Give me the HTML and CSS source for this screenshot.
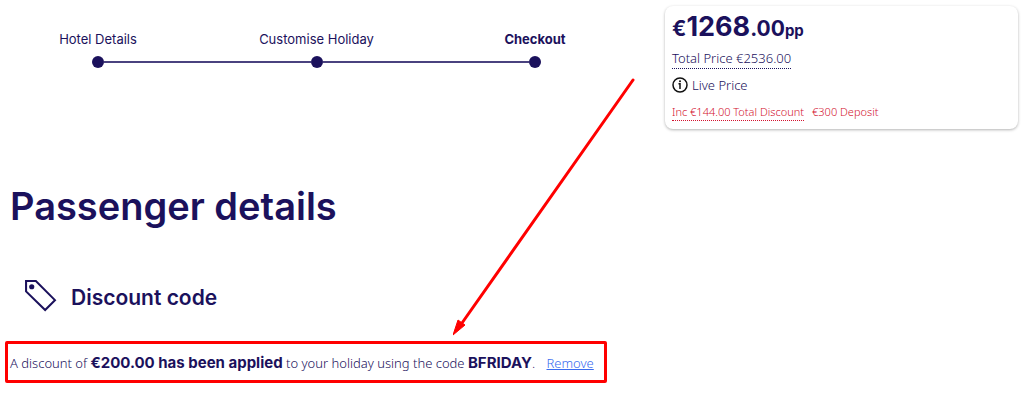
FILE: index.html
```html
<!DOCTYPE html>
<html lang="en">
<head>
<meta charset="utf-8">
<meta name="viewport" content="width=device-width, initial-scale=1">
<title>Passenger details</title>
<link rel="stylesheet" href="styles.css">
</head>
<body>
<div class="page">
  <main class="main">
    <nav class="progress" aria-label="Booking progress">
      <ol class="steps">
        <li class="step">Hotel Details</li>
        <li class="step">Customise Holiday</li>
        <li class="step current" aria-current="step">Checkout</li>
      </ol>
      <div class="track" aria-hidden="true">
        <span class="dot"></span><span class="line"></span><span class="dot"></span><span class="line"></span><span class="dot"></span>
      </div>
    </nav>
    <h1 class="title">Passenger details</h1>
    <div class="section-head">
      <svg class="tag" viewBox="0 0 32 32" aria-hidden="true">
        <path d="M2 2H11.500L30 20.500 20.500 30 2 12Z" fill="none" stroke="currentColor" stroke-width="2"/>
        <circle cx="7.500" cy="7.500" r="2.500" fill="currentColor"/>
      </svg>
      <h2 class="subtitle">Discount code</h2>
    </div>
    <p class="notice">A discount of <strong>€200.00 has been applied</strong> to your holiday using the code <strong>BFRIDAY</strong>. <a class="remove" href="#">Remove</a></p>
    <svg class="arrow" viewBox="0 0 182 258" aria-hidden="true">
      <path d="M180 2L9 245" stroke="#f00" stroke-width="3" stroke-linecap="round"/>
      <path d="M0 257L5 242 12 247Z" fill="#f00" stroke="#f00"/>
    </svg>
  </main>
  <aside class="card">
    <p class="price"><span>€</span><span class="whole">1268</span><span>.00</span><span class="unit">pp</span></p>
    <p class="total"><span class="dotted">Total Price €2536.00</span></p>
    <p class="live">
      <svg class="info" viewBox="0 0 16 16" aria-hidden="true">
        <circle cx="8" cy="8" r="7" fill="none" stroke="#111" stroke-width="1.500"/>
        <path d="M6.500 6.800H8V12" fill="none" stroke="#111" stroke-width="1.500"/>
        <circle cx="8" cy="4.200" r="1" fill="#111"/>
      </svg>
      Live Price
    </p>
    <p class="offers"><span class="dotted">Inc €144.00 Total Discount</span><span>€300 Deposit</span></p>
  </aside>
</div>
</body>
</html>
```
FILE: styles.css
```css
* {
  box-sizing: border-box;
}

body {
  margin: 0;
  background: #fff;
  color: #1b115c;
  font-family: "Noto Sans", "Open Sans", sans-serif;
  font-size: 13px;
  font-weight: 300;
}

h1, h2, p, ol {
  margin: 0;
}

.page {
  display: grid;
  grid-template-columns: 1fr 353px;
  gap: 58px;
  align-items: start;
  padding: 6px 6px 18px 5px;
}

.main {
  position: relative;
}

.progress {
  padding: 23px 12px 0 33px;
}

.steps {
  display: flex;
  justify-content: space-between;
  padding: 0;
  list-style: none;
}

.step {
  width: 120px;
  font-family: Inter, sans-serif;
  font-size: 13px;
  font-weight: 400;
  line-height: 20px;
  text-align: center;
  white-space: nowrap;
}

.step.current {
  font-weight: 700;
}

.track {
  display: flex;
  align-items: center;
  padding: 7px 54px 0;
}

.dot {
  width: 12px;
  height: 12px;
  border-radius: 50%;
  background: #1b115c;
}

.line {
  flex: 1;
  height: 2px;
  background: #4a427f;
}

.title {
  padding: 114px 5px 0;
  font-family: Inter, sans-serif;
  font-size: 38px;
  font-weight: 600;
  line-height: 48px;
}

.section-head {
  display: flex;
  align-items: center;
  gap: 14px;
  padding: 49px 0 0 19px;
}

.tag {
  width: 33px;
  height: 33px;
}

.subtitle {
  padding-top: 4px;
  font-family: Inter, sans-serif;
  font-size: 21px;
  font-weight: 600;
  line-height: 28px;
}

.notice {
  margin-top: 29px;
  padding: 9px 2px 7px;
  border: 3px solid #f00;
  border-radius: 2px;
  line-height: 20px;
}

.notice strong {
  font-family: Inter, sans-serif;
  font-size: 15px;
  font-weight: 700;
}

.remove {
  margin-left: 8px;
  color: #3b6cf0;
}

.arrow {
  position: absolute;
  top: 72px;
  left: 448px;
  width: 182px;
  height: 258px;
}

.card {
  padding: 4px 8px 8px 7px;
  border-radius: 8px;
  box-shadow: 0 1px 3px rgba(0, 0, 0, 0.3);
}

.price {
  font-family: Inter, sans-serif;
  font-size: 21px;
  font-weight: 700;
  line-height: 34px;
}

.whole {
  font-size: 27px;
}

.unit {
  font-size: 15px;
}

.total {
  line-height: 20px;
}

.dotted {
  display: inline-block;
  border-bottom: 1px dotted currentColor;
}

.live {
  display: flex;
  align-items: center;
  gap: 4px;
  padding-top: 6px;
  line-height: 20px;
}

.info {
  width: 16px;
  height: 16px;
}

.offers {
  display: flex;
  gap: 8px;
  padding-top: 8px;
  color: #d3122e;
  font-size: 11px;
  line-height: 17px;
}
```
